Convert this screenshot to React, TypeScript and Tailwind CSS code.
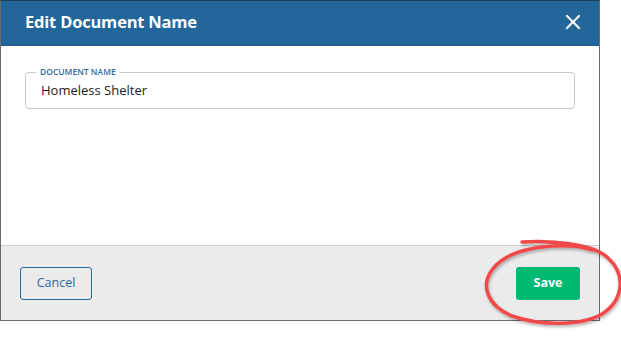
export default function App() {
  return (
    <div className="relative w-[621px] h-[342px] bg-white" style={{ fontFamily: '"Open Sans", "Noto Sans", sans-serif' }}>
      {/* Dialog */}
      <div className="w-[600px] h-[321px] flex flex-col border-l border-r border-b border-[#6b6b6b] border-t border-t-[#1d3f5e] bg-white">
        {/* Header */}
        <div className="h-[45px] bg-[#23669a] flex items-center justify-between pl-[24px] pr-[18px] pb-[2px] border-b border-[#1f5a88]">
          <h1 className="text-white text-[16.5px] font-bold tracking-[-0.2px]">Edit Document Name</h1>
          <svg width="16" height="16" viewBox="0 0 16 16" className="text-white">
            <path d="M2 2 L14 14 M14 2 L2 14" stroke="currentColor" strokeWidth="2" strokeLinecap="square" />
          </svg>
        </div>

        {/* Body */}
        <div className="flex-1 px-[24px] pt-[26px]">
          <div className="relative h-[37px] w-[550px] border border-[#c8c8c8] rounded-[4px] flex items-center px-[15px]">
            <span className="absolute -top-[7px] left-[10px] bg-white px-[4px] text-[8.5px] leading-[12px] font-semibold text-[#2d6ca2] uppercase">
              Document Name
            </span>
            <span className="text-[13px] text-[#222]">Homeless Shelter</span>
          </div>
        </div>

        {/* Footer */}
        <div className="h-[75px] bg-[#ebebeb] border-t border-[#cfcfcf] flex items-center justify-between px-[19px]">
          <button className="h-[33px] w-[72px] border border-[#2a6aa0] rounded-[3px] text-[12.5px] text-[#2a6aa0]">
            Cancel
          </button>
          <button className="h-[33px] w-[64px] bg-[#00b972] rounded-[3px] text-[12.5px] font-bold text-white">
            Save
          </button>
        </div>
      </div>

      {/* Annotation circle */}
      <svg className="absolute left-[478px] top-[234px] pointer-events-none" width="143" height="100" viewBox="0 0 143 100">
        <defs>
          <filter id="sh" x="-10%" y="-10%" width="130%" height="130%">
            <feDropShadow dx="1" dy="2" stdDeviation="1.5" floodColor="#000" floodOpacity="0.3" />
          </filter>
        </defs>
        <path
          d="M 44 8 C 74 6, 116 10, 130 24 C 148 40, 146 66, 124 80 C 104 92, 62 92, 34 82 C 10 72, 2 52, 14 36 C 24 22, 46 14, 74 12 C 90 11, 104 12, 114 16"
          fill="none"
          stroke="#f04848"
          strokeWidth="3.5"
          strokeLinecap="round"
          filter="url(#sh)"
        />
      </svg>
    </div>
  );
}
